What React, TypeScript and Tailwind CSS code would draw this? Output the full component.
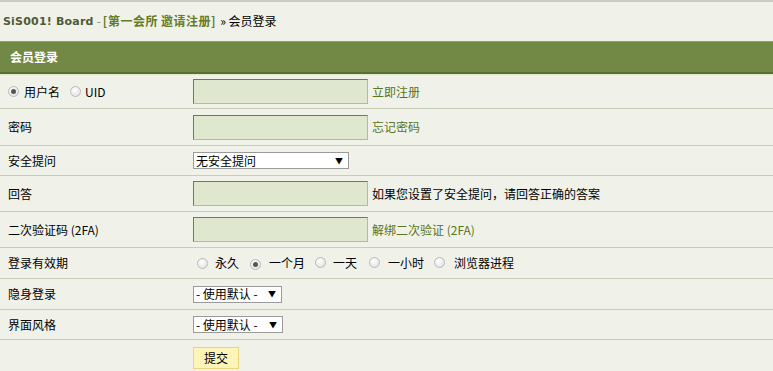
import React from "react";

const F = { fontFamily: '"Noto Sans CJK SC", "Noto Sans", sans-serif' };

function Radio({ checked }: { checked?: boolean }) {
  return (
    <span className="inline-flex h-[11px] w-[11px] shrink-0 items-center justify-center rounded-full border border-[#b9bcb4] bg-[radial-gradient(circle_at_40%_35%,#ffffff,#dcdcdc)]">
      {checked && <span className="h-[5px] w-[5px] rounded-full bg-[#555]" />}
    </span>
  );
}

function TextInput() {
  return (
    <div className="h-[25px] w-[175px] border border-t-[#6e7959] border-l-[#6e7959] border-b-[#b3bb9e] border-r-[#b3bb9e] bg-[#dfe7cf]" />
  );
}

function Select({ label, w }: { label: string; w: string }) {
  return (
    <div className={`flex h-[17px] items-center justify-between border border-[#9a9a9a] bg-white pl-[2px] pr-[5px] text-[12px] leading-none text-black ${w}`}>
      <span>{label}</span>
      <span className="text-[8px] leading-none">▼</span>
    </div>
  );
}

function Row({ h, label, children }: { h: string; label: React.ReactNode; children: React.ReactNode }) {
  return (
    <div className={`flex items-center border-b border-[#c8cdb8] ${h}`}>
      <div className="w-[193px] shrink-0 pl-[8px] text-[12px] leading-none">{label}</div>
      <div className="flex items-center">{children}</div>
    </div>
  );
}

export default function App() {
  return (
    <div className="h-[371px] w-[773px] overflow-hidden bg-[#f0f2ea] text-black" style={F}>
      <div className="flex h-[41px] items-center border-t-2 border-[#c9ccc1] pl-[3px] pb-[1px] text-[12px] leading-none">
        <span className="text-[11px] font-bold tracking-[0.2px] text-[#4f5a38]" style={{ fontFamily: '"DejaVu Sans", sans-serif' }}>
          SiS001! Board
        </span>
        <span className="ml-[3px] mr-[2px] text-[#888]">-</span>
        <span className="font-bold tracking-[0.5px] text-[#677b26]">[第一会所 邀请注册]</span>
        <span className="ml-[4px]">» 会员登录</span>
      </div>
      <div className="border-t border-[#939d78]">
        <div className="flex h-[30px] items-center bg-[#728945] pl-[10px] text-[12px] font-bold leading-none text-white">
          会员登录
        </div>
        <div className="h-[2px] bg-[#5b6e33]" />
        <div className="h-[1px] bg-[#dfe9c9]" />
      </div>
      <Row
        h="h-[34px]"
        label={
          <span className="flex items-center">
            <Radio checked />
            <span className="ml-[5px]">用户名</span>
            <span className="ml-[10px]"><Radio /></span>
            <span className="ml-[4px]">UID</span>
          </span>
        }
      >
        <TextInput />
        <span className="ml-[4px] text-[12px] leading-none text-[#587520]">立即注册</span>
      </Row>
      <Row h="h-[37px]" label="密码">
        <TextInput />
        <span className="ml-[4px] text-[12px] leading-none text-[#587520]">忘记密码</span>
      </Row>
      <Row h="h-[30px]" label="安全提问">
        <Select label="无安全提问" w="w-[156px]" />
      </Row>
      <Row h="h-[36px]" label="回答">
        <TextInput />
        <span className="ml-[4px] text-[12px] leading-none">如果您设置了安全提问，请回答正确的答案</span>
      </Row>
      <Row h="h-[36px]" label="二次验证码 (2FA)">
        <TextInput />
        <span className="ml-[4px] text-[12px] leading-none text-[#587520]">解绑二次验证 (2FA)</span>
      </Row>
      <Row h="h-[31px]" label="登录有效期">
        <div className="flex items-center pl-[4px] text-[12px] leading-none">
          <Radio />
          <span className="ml-[7px]">永久</span>
          <span className="ml-[11px]"><Radio checked /></span>
          <span className="ml-[8px]">一个月</span>
          <span className="ml-[10px]"><Radio /></span>
          <span className="ml-[7px]">一天</span>
          <span className="ml-[12px]"><Radio /></span>
          <span className="ml-[8px]">一小时</span>
          <span className="ml-[10px]"><Radio /></span>
          <span className="ml-[9px]">浏览器进程</span>
        </div>
      </Row>
      <Row h="h-[31px]" label="隐身登录">
        <Select label="- 使用默认 -" w="w-[89px]" />
      </Row>
      <Row h="h-[30px]" label="界面风格">
        <Select label="- 使用默认 -" w="w-[90px]" />
      </Row>
      <div className="flex h-[32px] items-end pb-[3px] pl-[193px]">
        <div className="flex h-[22px] w-[46px] items-center justify-center border border-[#e9d681] bg-[#fff4b8] text-[12px] leading-none">
          提交
        </div>
      </div>
    </div>
  );
}
